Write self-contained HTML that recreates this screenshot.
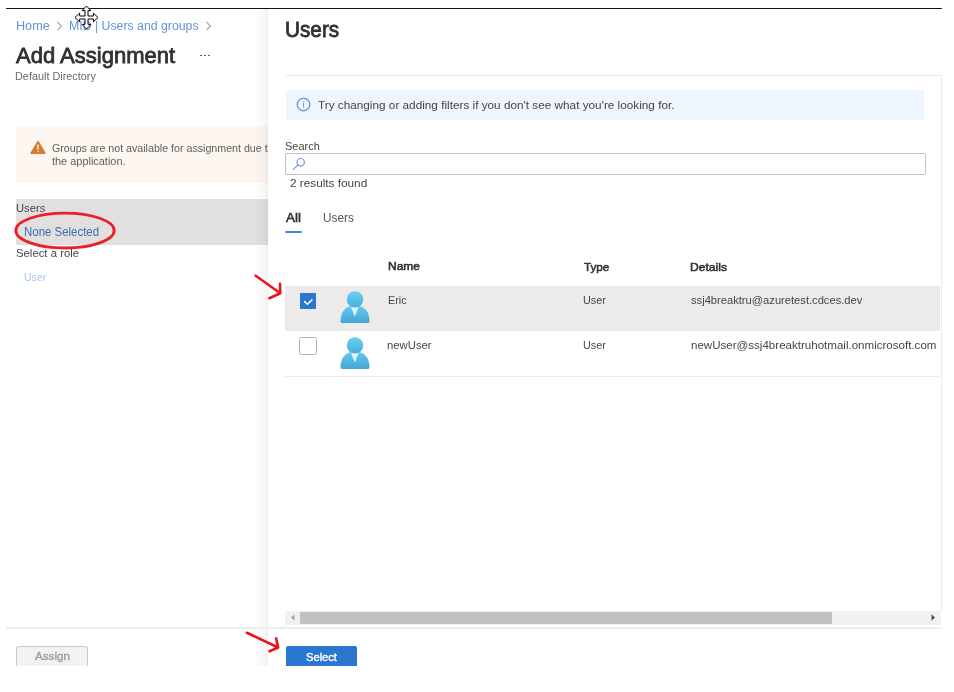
<!DOCTYPE html>
<html><head><meta charset="utf-8">
<style>
html,body{margin:0;padding:0;width:954px;height:692px;overflow:hidden;background:#fff;}
body{position:relative;font-family:"Liberation Sans",sans-serif;}
.a{position:absolute;}
.t{position:absolute;white-space:nowrap;transform-origin:0 0;font-family:"Liberation Sans",sans-serif;}
</style></head><body><div style="position:absolute;left:0;top:0;width:954px;height:692px;filter:blur(0.3px);">
<!-- left blade -->
<div class="a" style="left:0;top:0;width:954px;height:666px;background:#fff;"></div>
<!-- warning box -->
<div class="a" style="left:16px;top:126px;width:260px;height:57px;background:#fdf6f1;"></div>
<svg class="a" style="left:29px;top:139px" width="18" height="17" viewBox="0 0 18 17">
  <path d="M9 2.4 L16.1 14.3 L1.9 14.3 Z" fill="#d67c2c" stroke="#d67c2c" stroke-width="1.3" stroke-linejoin="round"/>
  <rect x="8.35" y="5.5" width="1.3" height="5.2" fill="#fdf6f1"/>
  <rect x="8.35" y="11.9" width="1.3" height="1.3" fill="#fdf6f1"/>
</svg>
<!-- users band -->
<div class="a" style="left:16px;top:199px;width:260px;height:45.5px;background:#e1e0df;"></div>
<!-- assign button -->
<div class="a" style="left:16px;top:646px;width:72px;height:20px;background:#f3f2f1;border:1px solid #cdcbc9;border-bottom:none;border-radius:3px 3px 0 0;box-sizing:border-box;"></div>

<span id="bc1" class="t" style="left:15.65px;top:19.94px;font-size:12px;line-height:12px;font-weight:400;color:#6392da;transform:scaleX(1.0525);">Home</span>
<span id="bc2" class="t" style="left:68.78px;top:19.94px;font-size:12px;line-height:12px;font-weight:400;color:#6392da;transform:scaleX(1.0246);">MID | Users and groups</span>
<span id="title" class="t" style="left:16.00px;top:44.58px;font-size:22px;line-height:22px;font-weight:400;color:#323130;transform:scaleX(1.0008);-webkit-text-stroke:0.8px #323130;">Add Assignment</span>
<span id="dd" class="t" style="left:15.14px;top:71.09px;font-size:11px;line-height:11px;font-weight:400;color:#6b6967;transform:scaleX(0.9877);">Default Directory</span>
<span id="warn1" class="t" style="left:51.72px;top:143.09px;font-size:11px;line-height:11px;font-weight:400;color:#5f5e5c;transform:scaleX(0.9689);">Groups are not available for assignment due to the</span>
<span id="warn2" class="t" style="left:52.08px;top:156.39px;font-size:11px;line-height:11px;font-weight:400;color:#5f5e5c;transform:scaleX(0.9932);">the application.</span>
<span id="lusers" class="t" style="left:15.95px;top:202.67px;font-size:11.5px;line-height:11.5px;font-weight:400;color:#464544;transform:scaleX(0.9739);">Users</span>
<span id="none" class="t" style="left:23.75px;top:226.34px;font-size:12px;line-height:12px;font-weight:400;color:#3d6cb4;transform:scaleX(0.9535);">None Selected</span>
<span id="role" class="t" style="left:15.51px;top:247.77px;font-size:11.5px;line-height:11.5px;font-weight:400;color:#464544;transform:scaleX(0.9861);">Select a role</span>
<span id="ruser" class="t" style="left:23.90px;top:271.97px;font-size:11.5px;line-height:11.5px;font-weight:400;color:#a9c6ec;transform:scaleX(0.9161);">User</span>
<span id="assign" class="t" style="left:34.80px;top:651.47px;font-size:11.5px;line-height:11.5px;font-weight:400;color:#a19f9d;transform:scaleX(1.0133);-webkit-text-stroke:0.4px #a19f9d;">Assign</span>
<!-- right panel -->
<div class="a" style="left:254px;top:9px;width:14px;height:657px;background:linear-gradient(to right,rgba(0,0,0,0),rgba(0,0,0,0.035) 80%,rgba(0,0,0,0.07));"></div>
<div class="a" style="left:268px;top:9px;width:686px;height:657px;background:#fff;"></div>
<!-- content border -->
<div class="a" style="left:286px;top:75px;width:656px;height:1px;background:#ebebeb;"></div>
<div class="a" style="left:941px;top:75px;width:1px;height:536px;background:#ebebeb;"></div>
<!-- info bar -->
<div class="a" style="left:286px;top:90px;width:638px;height:30px;background:#eff5fd;"></div>
<svg class="a" style="left:296.4px;top:96.6px" width="15" height="15" viewBox="0 0 15 15">
  <circle cx="7.5" cy="7.5" r="6.3" fill="none" stroke="#4f86de" stroke-width="1.15"/>
  <rect x="7" y="5.6" width="1" height="5" fill="#6c9be6"/>
  <rect x="7" y="4.1" width="1" height="1" fill="#8fb3ee"/>
</svg>
<!-- search box -->
<div class="a" style="left:285px;top:153px;width:641px;height:22px;border:1px solid #c3c2c1;border-radius:2px;box-sizing:border-box;background:#fff;"></div>
<svg class="a" style="left:291px;top:156px" width="16" height="16" viewBox="0 0 16 16">
  <circle cx="9.7" cy="6.2" r="3.7" fill="none" stroke="#6896e0" stroke-width="1.15"/>
  <path d="M7 8.9 L2.4 13.4" stroke="#6896e0" stroke-width="1.2" stroke-linecap="round"/>
</svg>
<!-- tab underline -->
<div class="a" style="left:285px;top:231px;width:16.6px;height:2px;border-radius:1px;background:#4187dd;"></div>
<!-- row 1 -->
<div class="a" style="left:285px;top:286px;width:655px;height:45px;background:#edebe9;"></div>
<div class="a" style="left:285px;top:375.5px;width:655px;height:1.2px;background:#eeeceb;"></div>
<!-- checkbox 1 -->
<div class="a" style="left:300px;top:293px;width:16px;height:16px;background:#2c76d0;border-radius:1px;"></div>
<svg class="a" style="left:300px;top:293px" width="16" height="16" viewBox="0 0 16 16">
  <path d="M4.6 8.6 L7.5 11.3 L11.9 6.9" fill="none" stroke="#fff" stroke-width="1.5" stroke-linecap="round" stroke-linejoin="round"/>
</svg>
<!-- checkbox 2 -->
<div class="a" style="left:299px;top:337px;width:18px;height:18px;border:1.5px solid #b3b2b1;border-radius:2.5px;box-sizing:border-box;background:#fff;"></div>
<!-- avatars -->
<svg class="a" style="left:339px;top:290px" width="32" height="34" viewBox="0 0 32 34">
  <defs>
    <linearGradient id="gh" x1="0" y1="0" x2="0" y2="1"><stop offset="0" stop-color="#64d3f3"/><stop offset="1" stop-color="#4aaedb"/></linearGradient>
    <linearGradient id="gb" x1="0" y1="0" x2="0" y2="1"><stop offset="0" stop-color="#5fcdf0"/><stop offset="1" stop-color="#47a5d2"/></linearGradient>
  </defs>
  <path d="M1.5 31.6 C1.5 22 6.2 15.6 16 15.6 C25.8 15.6 30.5 22 30.5 31.6 C30.5 32.6 29.9 33 28.9 33 L3.1 33 C2.1 33 1.5 32.6 1.5 31.6 Z" fill="url(#gb)"/>
  <path d="M11.8 16.6 L19.8 16.6 L15.8 26.6 Z" fill="#e2f6fc"/>
  <circle cx="16" cy="9.4" r="8.2" fill="url(#gh)"/>
</svg>
<svg class="a" style="left:339px;top:335.5px" width="32" height="34" viewBox="0 0 32 34">
  <path d="M1.5 31.6 C1.5 22 6.2 15.6 16 15.6 C25.8 15.6 30.5 22 30.5 31.6 C30.5 32.6 29.9 33 28.9 33 L3.1 33 C2.1 33 1.5 32.6 1.5 31.6 Z" fill="url(#gb)"/>
  <path d="M11.8 16.6 L19.8 16.6 L15.8 26.6 Z" fill="#e2f6fc"/>
  <circle cx="16" cy="9.4" r="8.2" fill="url(#gh)"/>
</svg>
<!-- scrollbar -->
<div class="a" style="left:285px;top:610.5px;width:656px;height:14.5px;background:#f1f1f1;"></div>
<div class="a" style="left:300.3px;top:611.8px;width:532px;height:12.3px;background:#c1c1c1;"></div>
<svg class="a" style="left:286px;top:610px" width="14" height="15" viewBox="0 0 14 15">
  <path d="M5 7.5 L8.5 4.5 L8.5 10.5 Z" fill="#a3a3a3"/>
</svg>
<svg class="a" style="left:926px;top:610px" width="14" height="15" viewBox="0 0 14 15">
  <path d="M9 7.5 L5.5 4.3 L5.5 10.7 Z" fill="#505050"/>
</svg>
<!-- select button -->
<div class="a" style="left:285.5px;top:646px;width:71.5px;height:20px;background:#2b77d0;border-radius:2px 2px 0 0;"></div>

<!-- bottom line -->
<div class="a" style="left:6px;top:627.3px;width:936px;height:1.3px;background:#eeedec;"></div>
<span id="utitle" class="t" style="left:285.27px;top:19.48px;font-size:22px;line-height:22px;font-weight:400;color:#323130;transform:scaleX(0.9433);-webkit-text-stroke:0.8px #323130;">Users</span>
<span id="info" class="t" style="left:318.34px;top:100.37px;font-size:11.5px;line-height:11.5px;font-weight:400;color:#464544;transform:scaleX(1.0229);">Try changing or adding filters if you don't see what you're looking for.</span>
<span id="search" class="t" style="left:285.22px;top:141.37px;font-size:11.5px;line-height:11.5px;font-weight:400;color:#464544;transform:scaleX(0.9537);">Search</span>
<span id="results" class="t" style="left:289.66px;top:178.27px;font-size:11.5px;line-height:11.5px;font-weight:400;color:#464544;transform:scaleX(1.0230);">2 results found</span>
<span id="tall" class="t" style="left:286.40px;top:211.92px;font-size:12.5px;line-height:12.5px;font-weight:400;color:#323130;transform:scaleX(1.0743);-webkit-text-stroke:0.55px #323130;">All</span>
<span id="tusers" class="t" style="left:323.06px;top:211.92px;font-size:12.5px;line-height:12.5px;font-weight:400;color:#585654;transform:scaleX(0.9446);">Users</span>
<span id="hname" class="t" style="left:387.89px;top:261.47px;font-size:11.5px;line-height:11.5px;font-weight:400;color:#323130;transform:scaleX(1.0427);-webkit-text-stroke:0.55px #323130;">Name</span>
<span id="htype" class="t" style="left:584.05px;top:261.97px;font-size:11.5px;line-height:11.5px;font-weight:400;color:#323130;transform:scaleX(1.0155);-webkit-text-stroke:0.55px #323130;">Type</span>
<span id="hdet" class="t" style="left:690.28px;top:261.97px;font-size:11.5px;line-height:11.5px;font-weight:400;color:#323130;transform:scaleX(1.0509);-webkit-text-stroke:0.55px #323130;">Details</span>
<span id="r1name" class="t" style="left:388.18px;top:294.77px;font-size:11.5px;line-height:11.5px;font-weight:400;color:#464544;transform:scaleX(0.9396);">Eric</span>
<span id="r1type" class="t" style="left:583.47px;top:294.97px;font-size:11.5px;line-height:11.5px;font-weight:400;color:#464544;transform:scaleX(0.9462);">User</span>
<span id="r1det" class="t" style="left:690.64px;top:294.97px;font-size:11.5px;line-height:11.5px;font-weight:400;color:#464544;transform:scaleX(0.9702);">ssj4breaktru@azuretest.cdces.dev</span>
<span id="r2name" class="t" style="left:387.46px;top:339.87px;font-size:11.5px;line-height:11.5px;font-weight:400;color:#464544;transform:scaleX(0.9825);">newUser</span>
<span id="r2type" class="t" style="left:583.47px;top:340.07px;font-size:11.5px;line-height:11.5px;font-weight:400;color:#464544;transform:scaleX(0.9462);">User</span>
<span id="r2det" class="t" style="left:690.85px;top:340.07px;font-size:11.5px;line-height:11.5px;font-weight:400;color:#464544;transform:scaleX(1.0046);">newUser@ssj4breaktruhotmail.onmicrosoft.com</span>
<span id="select" class="t" style="left:305.52px;top:652.47px;font-size:11.5px;line-height:11.5px;font-weight:400;color:#ffffff;transform:scaleX(0.9689);-webkit-text-stroke:0.4px #ffffff;">Select</span>

<!-- breadcrumb chevrons -->
<svg class="a" style="left:54.8px;top:19.6px" width="10" height="12" viewBox="0 0 10 12">
  <path d="M2.4 1.9 L6.4 6 L2.4 10.1" fill="none" stroke="#a4a3a2" stroke-width="1.15"/>
</svg>
<svg class="a" style="left:204.2px;top:19.6px" width="10" height="12" viewBox="0 0 10 12">
  <path d="M2.4 1.9 L6.4 6 L2.4 10.1" fill="none" stroke="#a4a3a2" stroke-width="1.15"/>
</svg>
<!-- more dots -->
<div class="a" style="left:200px;top:54.5px;width:2px;height:1.6px;background:#605e5c;"></div>
<div class="a" style="left:204px;top:54.5px;width:2px;height:1.6px;background:#605e5c;"></div>
<div class="a" style="left:208px;top:54.5px;width:2px;height:1.6px;background:#605e5c;"></div>

<!-- top black line -->
<div class="a" style="left:6px;top:8px;width:936px;height:1.3px;background:#141414;border-radius:1px;"></div>

<!-- red ellipse -->
<svg class="a" style="left:0;top:200px" width="140" height="60" viewBox="0 0 140 60">
  <ellipse cx="65" cy="30.6" rx="49.2" ry="17.4" fill="none" stroke="#e8202a" stroke-width="2.8"/>
</svg>
<!-- red arrows -->
<svg class="a" style="left:230px;top:260px" width="70" height="60" viewBox="0 0 70 60">
  <path d="M25.7 15.7 L50.3 33.3 M50 23.8 L50.3 33.3 L39.3 38.2" fill="none" stroke="#e8151f" stroke-width="2.6" stroke-linecap="round" stroke-linejoin="round"/>
</svg>
<svg class="a" style="left:230px;top:620px" width="70" height="40" viewBox="0 0 70 40">
  <path d="M16.9 12.8 L48.2 27.5 M46.1 18.3 L48.2 27.5 L39.5 31.3" fill="none" stroke="#e8151f" stroke-width="2.6" stroke-linecap="round" stroke-linejoin="round"/>
</svg>
<!-- move cursor -->
<svg class="a" style="left:74px;top:5px" width="25" height="25" viewBox="0 0 25 25">
  <path d="M11.00 5.60 L8.10 5.60 L12.50 1.00 L16.90 5.60 L14.00 5.60 L14.00 11.00 L19.40 11.00 L19.40 8.10 L24.00 12.50 L19.40 16.90 L19.40 14.00 L14.00 14.00 L14.00 19.40 L16.90 19.40 L12.50 24.00 L8.10 19.40 L11.00 19.40 L11.00 14.00 L5.60 14.00 L5.60 16.90 L1.00 12.50 L5.60 8.10 L5.60 11.00 L11.00 11.00 Z" fill="#fff" stroke="#000" stroke-width="1.0" stroke-linejoin="miter"/>
</svg>
</div></body></html>
